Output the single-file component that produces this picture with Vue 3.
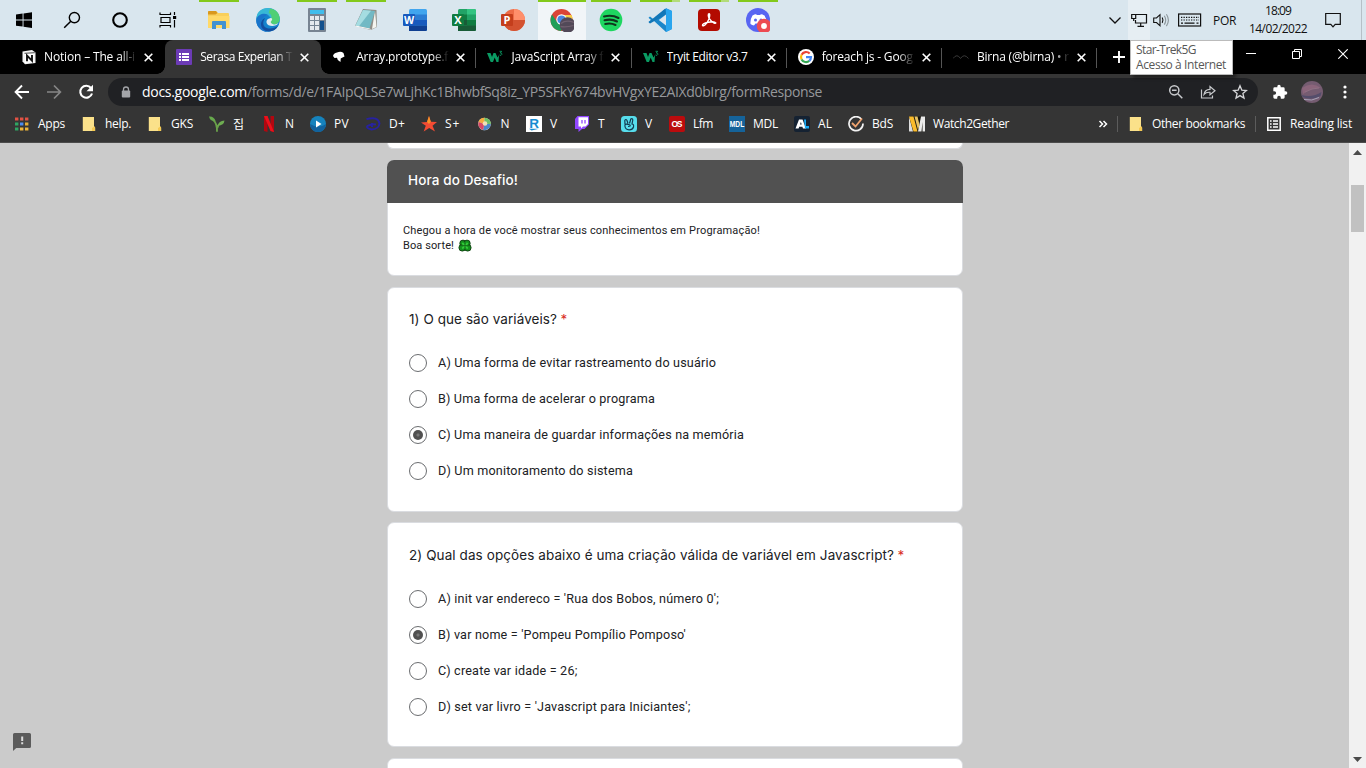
<script setup>
// v-fit="px": spreads or tightens the letters so the text takes the given width
const vFit = {
  mounted(el, { value }) {
    if (!value) return
    const natural = el.getBoundingClientRect().width
    const count = [...el.textContent].length
    el.style.letterSpacing = (value - natural) / count + 'px'
  },
}

const art = {
  start: '<path d="M4 6.4L10.6 5.5V11.5H4zM11.5 5.4L20 4.2V11.5H11.5zM4 12.4H10.6V18.6L4 17.7zM11.5 12.4H20V19.9L11.5 18.7z" fill="#000"/>',
  search: '<circle cx="14.4" cy="9.6" r="5.1" fill="none" stroke="#000" stroke-width="1.4"/><path d="M10.8 13.2L4.2 19.8" stroke="#000" stroke-width="1.5"/>',
  cortana: '<circle cx="12" cy="12" r="6.8" fill="none" stroke="#000" stroke-width="2.1"/>',
  taskview: '<path d="M4 4.5V6.5H14.5V4.5M4 19.5V17.5H14.5V19.5M5 9.5H14V14.5H5zM18.5 4V7M18.5 12V19.5" fill="none" stroke="#000" stroke-width="1.2"/><rect x="17" y="8" width="3.2" height="3" fill="#000"/>',
  explorer: '<path d="M1 4q0-1 1-1h7l2 2h10q1 0 1 1v14H1z" fill="#f8cf5b"/><path d="M1 4q0-1 1-1h7l1.5 2-2 1.5H1z" fill="#d9981d"/><path d="M1 8H22.500V20H1z" fill="#ffd968"/><path d="M5 21V14q0-1 1-1h12q1 0 1 1v7h-4v-4H9v4z" fill="#4292d2"/>',
  edge: '<circle cx="12" cy="12" r="11.800" fill="#1483cd"/><path d="M.6 9C2-2 21-4 23.700 10c.5 4-3 7-7 6-3-1-3-2-2-4 1-4-3-5-6-4Q3 9 1 14z" fill="#37b8d6"/><path d="M14 .5C20 1 24 6 23.700 11c0 4-4 6-7 5-3-1-3-2-2-4 2-4 0-6-2-7z" fill="#50cf75"/><path d="M8 9C3 12 5 23 13 23.700 6 25-1 18 .5 11 2 6 10 4 13 8q-3-1-5 1z" fill="#1974ca"/><path d="M9 10C3 20 14 23 22 18 17 27 4 24 5 15q1-4 4-5z" fill="#134e9f"/><path d="M14.600 10c3 0 1 3 0 4 1 3 5 3 8 1-2 4-11 4-12 0q-1-4 4-5z" fill="#e1eaf0"/>',
  calc: '<rect x="3" y="0" width="18" height="24" rx="1" fill="#778492"/><rect x="5" y="2" width="14" height="4" fill="#41bdec"/><path d="M5 8h4v4H5zM10 8h4v4h-4zM15 8h4v4h-4zM5 13h4v4H5zM10 13h4v4h-4zM5 18h4v4H5zM10 18h4v4h-4z" fill="#e6e9ed"/><path d="M15 13h4v9h-4z" fill="#12518d"/>',
  notepad: '<path d="M9 1L22.500 2 23 19 17 22 1 18z" fill="#8f8f88"/><path d="M21 3L22.500 19 18 21z" fill="#f5f5ef"/><path d="M9 2L21 3 15.500 20.500 1.500 17.500z" fill="#72b9c4"/><path d="M9 2L17 2.700 5 18.200 1.500 17.500z" fill="#a5dce1"/><path d="M1.500 17.500L15.500 20.500 18 21.800 1.500 18.500z" fill="#fff"/>',
  word: '<rect x="6" y="1" width="18" height="22" rx="1.500" fill="#41a5ee"/><path d="M6 6.500H24V12H6z" fill="#2b7cd3"/><path d="M6 12H24V17.500H6z" fill="#185abd"/><path d="M6 17.500H24V21.500q0 1.500-1.500 1.500H6z" fill="#103f91"/><rect x="0" y="6" width="12" height="12" rx="1" fill="#185abd"/><text x="6" y="15.800" font-size="10.500" text-anchor="middle" font-weight="700" font-family="Open Sans,sans-serif" fill="#fff">W</text>',
  excel: '<rect x="6" y="1" width="18" height="22" rx="1.500" fill="#21a366"/><path d="M15 1h7.500Q24 1 24 2.500V6.500H15z" fill="#33c481"/><path d="M6 6.500h9V12H6z" fill="#107c41"/><path d="M6 12h18v5.500H6z" fill="#185c37"/><path d="M15 12h9v5.500h-9z" fill="#107c41"/><path d="M6 17.500H24V21.500q0 1.500-1.500 1.500H6z" fill="#185c37"/><rect x="0" y="6" width="12" height="12" rx="1" fill="#107c41"/><text x="6" y="16" font-size="11" text-anchor="middle" font-weight="700" font-family="Open Sans,sans-serif" fill="#fff">X</text>',
  ppt: '<circle cx="13" cy="12" r="11" fill="#ed6c47"/><path d="M13 1A11 11 0 0 1 24 12H13z" fill="#ff8f6b"/><path d="M2 12H24A11 11 0 0 1 2 12z" fill="#d35230"/><rect x="0" y="6" width="12" height="12" rx="1" fill="#c43e1c"/><text x="6" y="16" font-size="11" text-anchor="middle" font-weight="700" font-family="Open Sans,sans-serif" fill="#fff">P</text>',
  chrome: '<circle cx="11.500" cy="12" r="11" fill="#da4437"/><path d="M2 6.500A11 11 0 0 0 11 23L15 15 7 14z" fill="#1f9e58"/><path d="M11.500 7H21.500A11 11 0 0 1 12 23L16 14z" fill="#f8cd45"/><circle cx="11.500" cy="11.500" r="5.200" fill="#fff"/><circle cx="11.500" cy="11.500" r="4.100" fill="#4a86e0"/><circle cx="17.500" cy="17" r="7.800" fill="#524958"/><path d="M11 15.500q5-4 13-1M10.500 18.500q6 1 13-1" fill="none" stroke="#70606f" stroke-width="1.300"/>',
  spotify: '<circle cx="12" cy="12" r="11.300" fill="#1ed760"/><path d="M5 8.500q8-2 14.500 1.500M5.500 12.300q7-1.800 12.500 1.200M6.200 16q5.800-1.300 10.300 1" fill="none" stroke="#10351d" stroke-width="2" stroke-linecap="round"/>',
  vscode: '<path d="M18 .3L24 3V21L18 24 5.500 12.500 2 15.300.5 14 3 12 .5 9.700 2 8.400 5.500 11.200z" fill="#1a86ca"/><path d="M18 .3L24 3V21L18 24z" fill="#29a5ee"/><path d="M.6 14L17 .8 18 6.500 2 15.500z" fill="#1277b8"/><path d="M18 6.500V17.500L10.800 12z" fill="#dbe6ee"/>',
  acrobat: '<rect x="1" y="1" width="22" height="22" rx="4" fill="#b30b00"/><path d="M5.500 17.500C5 15 17 12.300 18.800 15 18 17 10 10.500 11.500 6c1.500-1.500 1.700 2 .2 5.500S7 19 5.500 17.500z" fill="none" stroke="#fff" stroke-width="1.400"/>',
  discord: '<circle cx="12" cy="12" r="12" fill="#5865f2"/><path d="M6.500 7.500Q9 6 10 6.200L11 7h3l1-.8q2 .3 3.500 1.300 2.500 4 2 8.500-2 1.500-3.500 1.500L15.500 15.500h-6L8 17.500Q6 17 4.500 16 4 11.500 6.500 7.500z" fill="#fff"/><circle cx="9.500" cy="12" r="1.500" fill="#5865f2"/><circle cx="15" cy="12" r="1.500" fill="#5865f2"/><circle cx="18" cy="18" r="7.300" fill="#ed4b52"/><circle cx="18" cy="18" r="2.900" fill="#fff"/>',

  notion: '<path d="M1.500 2.500L11 1l3.500 2.500V14L4 15.300 1.500 12.500z" fill="#f4f4f4"/><path d="M4 5L13 4.200V13L4 14z" fill="#fff"/><path d="M3.500 4.300L13.800 3.700" stroke="#222" stroke-width=".8"/><path d="M6 12.300V6.500L11 11.700V6" fill="none" stroke="#111" stroke-width="1.900"/>',
  forms: '<rect width="16" height="16" rx="1" fill="#6c3bb6"/><path d="M3 4h2v2H3zM3 7h2v2H3zM3 10h2v2H3zM6 4h7v2H6zM6 7h7v2H6zM6 10h7v2H6z" fill="#fff"/>',
  mdn: '<path d="M1 7Q1.500 4 5 3.500q4-1.500 6.500.5L12.500 7.500 10.500 8.500 8.700 9.500 8.500 13 5.800 11 5 8.800 2.500 9z" fill="#fff"/>',
  w3: '<path d="M0 4h3.500L5 8l1.500-4h2l2 4.500L12 6l-.5 7H9.500L7.700 8.500 6 13H3.700z" fill="#0a9b63"/><path d="M12.500 2.300h2.200L13.300 4q2 0 1.500 1.500T12.500 6" fill="none" stroke="#0a9b63" stroke-width=".9"/>',
  google: '<circle cx="8" cy="8" r="8" fill="#fff"/><g fill="none" stroke-width="2.200"><path d="M11.700 4.600A5 5 0 0 0 3.600 5.700" stroke="#ea4335"/><path d="M3.600 5.700A5 5 0 0 0 3.600 10.400" stroke="#fbbc05"/><path d="M3.600 10.400A5 5 0 0 0 11.300 11.900" stroke="#34a853"/><path d="M11.300 11.900A5 5 0 0 0 13 8.100H8" stroke="#4285f4"/></g>',
  wave: '<path d="M0 9.500Q4 4 7.500 9.500 11 4 15.500 9.500" fill="none" stroke="#3a3a3a" stroke-width="1"/>',

  apps: '<path d="M1 1.500h3.400v3H1zM6 1.500h3.400v3H6zM11 1.500h3.400v3H11z" fill="#e25244"/><path d="M1 6.500h3.400v3H1z" fill="#2fa562"/><path d="M6 6.500h3.400v3H6z" fill="#4b8bf0"/><path d="M11 6.500h3.400v3H11z" fill="#e6ad35"/><path d="M1 11.500h3.400v3H1z" fill="#2fa562"/><path d="M6 11.500h3.400v3H6zM11 11.500h3.400v3H11z" fill="#edb53a"/>',
  folder: '<path d="M1.800 1H13v10.500h1.200V15H1.800z" fill="#fbe18a"/><path d="M11 12l3-1.800V15H11z" fill="#f6ca52"/>',
  plant: '<path d="M8 15.800Q8.500 8 4 3.500M8.300 12Q9 8.500 12 7" fill="none" stroke="#6aa14a" stroke-width="1.800"/><path d="M0 .5q5-.5 6.500 4.500Q1 5.500 0 .5z" fill="#67a94d"/><path d="M9 9.500q.5-4.500 6.500-5-.5 5-6.500 5z" fill="#6ead51"/>',
  netflix: '<path d="M3 0h3.500v16L3 15zM9.500 0H13v16l-3.500-1z" fill="#b20710"/><path d="M3 0h3.500L13 16 9.500 15z" fill="#ed101b"/>',
  prime: '<circle cx="8" cy="8" r="8" fill="#1683bd"/><path d="M0 8a8 8 0 0 0 16 0q-7 5-16 0z" fill="#12629d"/><path d="M6 4.500L11.500 8 6 11.500z" fill="#fff"/>',
  disney: '<path d="M1.500 3.200Q13 0 14.500 7.500q-.5 5.500-8 6Q.5 12 2.500 10q4-2.500 8.500-1.500M7 7v4" fill="none" stroke="#2722a0" stroke-width="1.900"/>',
  star: '<path d="M8 0l1.800 5.800L16 6l-4.500 3.800L14 15.500 8.200 12 2.700 15.500 4.800 9.800 0 6.500l6-.6z" fill="#f34b33"/><path d="M8 0l1.800 5.800L8 8 6 5.900z" fill="#f79228"/>',
  globe: '<circle cx="7.500" cy="8" r="6.300" fill="#ded9c4"/><path d="M1.500 6a6.300 6.300 0 0 1 6-4.300V8z" fill="#f5ab3d"/><path d="M7.500 1.700A6.300 6.300 0 0 1 13.800 8L7.500 8z" fill="#6dbf65"/><path d="M13.800 8A6.300 6.300 0 0 1 6 14L7.500 8z" fill="#4b86ca"/><path d="M1.500 6q-1 6 4.500 8l1.500-6z" fill="#d74968"/><circle cx="8" cy="7.500" r="2.300" fill="#f1dfb8"/>',
  viki: '<path d="M0 0h16v16H0z" fill="#fff"/><text x="8" y="12" text-anchor="middle" font-size="13.500" font-weight="700" font-family="Liberation Sans,sans-serif" fill="#168bd1">R</text><path d="M3 12.800h10l-7.500 1.600z" fill="#168bd1"/>',
  twitch: '<path d="M3.500 0L1 3v10h3.500v3L8 13h2.500L15 8.500V0z" fill="#9146ff"/><path d="M4.500 1.200H14V8l-2.500 2.500H9l-2 2v-2H4.500z" fill="#fff"/><path d="M8 4v3.500M11 4v3.500" stroke="#9146ff" stroke-width="1.300"/>',
  hand: '<rect width="16" height="16" rx="3.500" fill="#57ddec"/><path d="M4 8.500L3.800 4.500Q4.800 2.500 6 4.500L7 7.500M8.500 7.500L9.800 3Q11.500 2 11.800 4L11 8Q13 8 12.500 11 11.500 14 8 13.800 4.500 13.500 4 10.500 3.500 8 6 8.200L9 9Q10 10.500 7 10.500" fill="none" stroke="#123a50" stroke-width="1.200"/>',
  lastfm: '<rect width="16" height="16" rx="2" fill="#bb0b0d"/><text x="8" y="11" text-anchor="middle" font-size="8.500" font-weight="700" font-family="Liberation Sans,sans-serif" fill="#fff" textLength="11">OS</text>',
  mdl: '<path d="M0 0h16v16H0z" fill="#15639a"/><text x="8" y="11" text-anchor="middle" font-size="8.500" font-weight="700" font-family="Liberation Sans,sans-serif" fill="#fff" textLength="14.500" lengthAdjust="spacingAndGlyphs">MDL</text>',
  anilist: '<rect width="16" height="16" rx="2" fill="#152232"/><path d="M1.500 12.500L5 3.500h3.500L12 12.500H9l-.6-1.700H5.200l-.6 1.700zM6 8.500h1.700l-.8-2.600z" fill="#fff"/><path d="M10 3.500h2v6.500h3v2.500h-4z" fill="#18a9f5"/>',
  check: '<path d="M13.500 3.300A7 7 0 1 0 15 7.500" fill="none" stroke="#f3f3f3" stroke-width="1.700"/><path d="M4 7l3.500 3.500L14 2.500" fill="none" stroke="#efa36f" stroke-width="1.800"/>',
  w2g: '<path d="M0 .5h16v15H0z" fill="#16150f"/><path d="M0 .5v15h4z" fill="#ddd"/><path d="M0 .5L4.500 15.500H8.500L4.500.5z" fill="#fbbc2c"/><path d="M9 15.500L12 .5h4v15h-2.500V6l-1 9.500z" fill="#eaeaea"/><path d="M5.500.5H8.500L10.500 9 9 14z" fill="#e6c266"/>',

  chevron: '<path d="M2.500 5.500L8 11l5.500-5.500" fill="none" stroke="#111" stroke-width="1.300"/>',
  network: '<path d="M5 2.500h10.500v8.500h-11V8M9.700 11v3M6.500 14.300h6.500M.7 2.500h4v4h-4zM2.700 6.500V9" fill="none" stroke="#111" stroke-width="1.200"/>',
  sound: '<path d="M.7 6h2.800L7 2.700v11L3.500 10.500H.7z" fill="none" stroke="#111" stroke-width="1.100"/><path d="M9.200 5.500q1.600 2.700 0 5.400" fill="none" stroke="#111" stroke-width="1.100"/><path d="M11.300 3.800q2.800 4.400 0 8.800M13.400 2.300q4 5.900 0 11.800" fill="none" stroke="#8c969b" stroke-width="1.100"/>',
  keyboard: '<rect x=".6" y="2" width="22" height="12" fill="none" stroke="#111" stroke-width="1.200"/><path d="M3 5.300h18M3 8h18" stroke="#111" stroke-width="1.200" stroke-dasharray="1.300 1.200"/><path d="M3 11.200h2M6.500 11.200h10M18.500 11.200h2" stroke="#111" stroke-width="1.200"/>',
  notice: '<path d="M.7 1.500h14.600v10.800H10.200L8 14.800 5.800 12.300H.7z" fill="none" stroke="#111" stroke-width="1.200"/>',
}

const systemIcons = ['start', 'search', 'cortana', 'taskview']
const apps = [
  { name: 'explorer', line: 'full' },
  { name: 'edge' },
  { name: 'calc', line: 'full' },
  { name: 'notepad', line: 'full' },
  { name: 'word' },
  { name: 'excel' },
  { name: 'ppt' },
  { name: 'chrome', line: 'wide', active: true },
  { name: 'spotify', line: 'full' },
  { name: 'vscode', line: 'split' },
  { name: 'acrobat', line: 'split' },
  { name: 'discord', line: 'full' },
]

const tabs = [
  { icon: 'notion', title: 'Notion – The all-i', w: 91 },
  { icon: 'forms', title: 'Serasa Experian T', w: 92, active: true },
  { icon: 'mdn', title: 'Array.prototype.f', w: 92 },
  { icon: 'w3', title: 'JavaScript Array f', w: 92 },
  { icon: 'w3', title: 'Tryit Editor v3.7', w: 81 },
  { icon: 'google', title: 'foreach js - Goog', w: 91 },
  { icon: 'wave', title: 'Birna (@birna) • r', w: 92 },
]

const bookmarks = [
  { icon: 'apps', label: 'Apps', w: 27 },
  { icon: 'folder', label: 'help.', w: 26 },
  { icon: 'folder', label: 'GKS', w: 22 },
  { icon: 'plant', label: '집', w: 12 },
  { icon: 'netflix', label: 'N', w: 9 },
  { icon: 'prime', label: 'PV', w: 15 },
  { icon: 'disney', label: 'D+', w: 16 },
  { icon: 'star', label: 'S+', w: 15.5 },
  { icon: 'globe', label: 'N', w: 9.5 },
  { icon: 'viki', label: 'V', w: 8 },
  { icon: 'twitch', label: 'T', w: 7 },
  { icon: 'hand', label: 'V', w: 8 },
  { icon: 'lastfm', label: 'Lfm', w: 20 },
  { icon: 'mdl', label: 'MDL', w: 25 },
  { icon: 'anilist', label: 'AL', w: 14 },
  { icon: 'check', label: 'BdS', w: 21 },
  { icon: 'w2g', label: 'Watch2Gether', w: 76 },
]

const questions = [
  {
    title: '1) O que são variáveis?',
    w: 148,
    selected: 2,
    options: [
      ['A) Uma forma de evitar rastreamento do usuário', 278],
      ['B) Uma forma de acelerar o programa', 217],
      ['C) Uma maneira de guardar informações na memória', 306],
      ['D) Um monitoramento do sistema', 195],
    ],
  },
  {
    title: '2) Qual das opções abaixo é uma criação válida de variável em Javascript?',
    w: 485,
    selected: 1,
    options: [
      ["A) init var endereco = 'Rua dos Bobos, número 0';", 281],
      ["B) var nome = 'Pompeu Pompílio Pomposo'", 248],
      ['C) create var idade = 26;', 139.5],
      ["D) set var livro = 'Javascript para Iniciantes';", 252.5],
    ],
  },
]
</script>

<template>
  <div class="screen">
    <header class="taskbar">
      <div v-for="n in systemIcons" :key="n" class="sys"><svg viewBox="0 0 24 24" v-html="art[n]" /></div>
      <div class="apps">
        <div v-for="a in apps" :key="a.name" class="app" :class="{ active: a.active }">
          <i v-if="a.line" class="line" :class="a.line"></i>
          <svg viewBox="0 0 24 24" v-html="art[a.name]" />
        </div>
      </div>
      <div class="tray">
        <div class="t-chev"><svg width="16" height="16" v-html="art.chevron" /></div>
        <div class="t-net"><svg width="17" height="16" v-html="art.network" /></div>
        <svg class="t-sound" width="18" height="16" v-html="art.sound" />
        <svg class="t-key" width="24" height="16" v-html="art.keyboard" />
        <span class="t-lang"><span v-fit="23">POR</span></span>
        <div class="clock"><span v-fit="26">18:09</span><span v-fit="58">14/02/2022</span></div>
        <svg class="t-note" width="16" height="16" v-html="art.notice" />
        <i class="t-edge"></i>
      </div>
    </header>

    <nav class="tabs">
      <div v-for="(t, i) in tabs" :key="i" class="tab" :class="{ active: t.active, sep: i > 1 }">
        <svg class="fav" viewBox="0 0 16 16" v-html="art[t.icon]" />
        <div class="title" :class="{ plain: i === 4 }"><span v-fit="t.w">{{ t.title }}</span></div>
        <svg class="close" viewBox="0 0 9 9"><path d="M.7.7l7.600 7.600M8.300.7L.7 8.300" stroke="#fff" stroke-width="1.600" /></svg>
      </div>
      <svg class="plus" viewBox="0 0 12 12"><path d="M6 0v12M0 6h12" stroke="#fff" stroke-width="1.900" /></svg>
      <div class="winctl">
        <svg width="10" height="10"><path d="M0 4.500h10" stroke="#fff" /></svg>
        <svg width="10" height="10"><path d="M.5 2.500h7v7h-7zM2.500 2.500v-2h7v7h-2" fill="none" stroke="#fff" /></svg>
        <svg width="10" height="10"><path d="M.3.3l9.400 9.400M9.700.3L.3 9.700" stroke="#fff" stroke-width="1.100" /></svg>
      </div>
    </nav>

    <div class="toolbar">
      <svg class="nav" viewBox="0 0 16 16"><path d="M15 8H2M8 1.500L1.600 8 8 14.500" fill="none" stroke="#fff" stroke-width="1.900" /></svg>
      <svg class="nav" viewBox="0 0 16 16"><path d="M1 8H14M8 1.500L14.400 8 8 14.500" fill="none" stroke="#868686" stroke-width="1.700" /></svg>
      <svg class="nav" viewBox="0 0 16 16"><path d="M13 4A6 6 0 1 0 14 9.500" fill="none" stroke="#fff" stroke-width="2.100" /><path d="M15 .7v6.500H8.500z" fill="#fff" /></svg>
      <div class="omni">
        <svg class="lock" viewBox="0 0 10 12"><path d="M2.500 5V3.500a2.500 2.500 0 0 1 5 0V5" fill="none" stroke="#a3a5a9" stroke-width="1.300" /><rect x=".8" y="4.500" width="8.400" height="7" rx="1" fill="#a3a5a9" /></svg>
        <span class="host" v-fit="105">docs.google.com</span><span class="path" v-fit="575">/forms/d/e/1FAIpQLSe7wLjhKc1BhwbfSq8iz_YP5SFkY674bvHVgxYE2AIXd0bIrg/formResponse</span>
        <div class="omni-icons">
          <svg width="16" height="16" viewBox="0 0 16 16" fill="none" stroke="#c8cacd" stroke-width="1.500"><circle cx="6.300" cy="6.300" r="4.600" /><path d="M9.800 9.800l4.500 4.500M4 6.300h4.600" /></svg>
          <svg width="16" height="16" viewBox="0 0 16 16" fill="none" stroke="#c8cacd" stroke-width="1.200"><path d="M1.500 5.500V14h11V11.500M4 10.500q.7-5 6-5.200V2.500L15 6.700l-5 4.100V8.300Q6 8 4 10.500z" /></svg>
          <svg width="16" height="16" viewBox="0 0 16 16" fill="none" stroke="#d5d6d8" stroke-width="1.300"><path d="M8 1.800l1.800 4.300 4.600.4-3.500 3 1.100 4.600L8 11.600 4 14.100l1.100-4.600-3.500-3 4.600-.4z" /></svg>
        </div>
      </div>
      <svg class="puzzle" viewBox="0 0 24 24"><path fill="#fff" d="M20.500 11H19V7a2 2 0 0 0-2-2h-4V3.500a2.500 2.500 0 0 0-5 0V5H4a2 2 0 0 0-2 2v3.800h1.500a2.700 2.700 0 0 1 0 5.400H2V20a2 2 0 0 0 2 2h3.800v-1.500a2.700 2.700 0 0 1 5.400 0V22H17a2 2 0 0 0 2-2v-4h1.500a2.500 2.500 0 0 0 0-5z" /></svg>
      <svg class="avatar" viewBox="0 0 22 22"><circle cx="11" cy="11" r="11" fill="#755c71" /><path d="M1 7q10-7 19 0-9-1-18 6z" fill="#8b657b" /><path d="M.5 14q11 3 20-3l-1 4q-9 5-18 1z" fill="#544d6b" /><path d="M3 18.500q8 2 15-2" stroke="#a7a3b8" fill="none" /><path d="M4 11q7-4 14-4" stroke="#8f7183" fill="none" /></svg>
      <svg class="dots" viewBox="0 0 4 14"><g fill="#fff"><circle cx="2" cy="2" r="1.600" /><circle cx="2" cy="7" r="1.600" /><circle cx="2" cy="12" r="1.600" /></g></svg>
    </div>

    <div class="bookmarks">
      <div v-for="(b, i) in bookmarks" :key="i" class="bm">
        <svg viewBox="0 0 16 16" v-html="art[b.icon]" /><span v-fit="b.w">{{ b.label }}</span>
      </div>
      <div class="bm-right">
        <svg class="more" width="10" height="10"><path d="M1.500 2L4.500 5 1.500 8M5.500 2L8.500 5 5.500 8" fill="none" stroke="#fff" stroke-width="1.500" /></svg>
        <i class="bm-div"></i>
        <svg viewBox="0 0 16 16" v-html="art.folder" /><span v-fit="93">Other bookmarks</span>
        <i class="bm-div second"></i>
        <svg viewBox="0 0 16 16"><path d="M1.800 1.800h12.400v12.400H1.800z" fill="none" stroke="#fff" stroke-width="1.500" /><path d="M4 5h1.600M4 8h1.600M4 11h1.600M7 5h5M7 8h5M7 11h5" stroke="#fff" stroke-width="1.300" /></svg>
        <span v-fit="62">Reading list</span>
      </div>
    </div>

    <main class="page">
      <div class="column">
        <section class="card stub"></section>
        <section class="card intro">
          <h2><span v-fit="110">Hora do Desafio!</span></h2>
          <p>
            <span v-fit="357">Chegou a hora de você mostrar seus conhecimentos em Programação!</span>
            <span class="luck"><span v-fit="51">Boa sorte!</span>
              <svg viewBox="0 0 14 14"><g fill="#14921e" stroke="#123d12" stroke-width=".9"><circle cx="5" cy="4.300" r="3.200" /><circle cx="9" cy="4.300" r="3.200" /><circle cx="4.300" cy="8.700" r="3.400" /><circle cx="9.700" cy="8.700" r="3.400" /></g><circle cx="7" cy="6.700" r="3.600" fill="#1da526" /><path d="M4.300 4L9.700 9.500M9.700 4L4.300 9.500" stroke="#35cf3b" stroke-width="1.500" /><path d="M7 2.500v9.500M2.500 6.700h9" stroke="#0b5511" stroke-width=".7" /></svg>
            </span>
          </p>
        </section>
        <section v-for="q in questions" :key="q.title" class="card question">
          <h3><span v-fit="q.w">{{ q.title }}</span><b>*</b></h3>
          <div v-for="(o, i) in q.options" :key="o[0]" class="option">
            <i class="radio" :class="{ on: i === q.selected }"></i><span v-fit="o[1]">{{ o[0] }}</span>
          </div>
        </section>
        <section class="card next"></section>
      </div>
      <aside class="scroll">
        <svg width="9" height="5"><path d="M0 5L4.500 0 9 5z" fill="#4b4b4b" /></svg>
        <i class="thumb"></i>
        <svg width="9" height="5"><path d="M0 0L4.500 5 9 0z" fill="#4b4b4b" /></svg>
      </aside>
      <svg class="feedback" viewBox="0 0 18 18"><path d="M1.500 0H16.500Q18 0 18 1.500V13.500Q18 15 16.500 15H3.200L0 18V1.500Q0 0 1.500 0z" fill="#5b5b5b" /><path d="M8.200 3.500h2v4.500h-2zM8.200 9.300h2v2h-2z" fill="#ddd" /></svg>
    </main>

    <div class="tooltip"><span v-fit="60">Star-Trek5G</span><span v-fit="90">Acesso à Internet</span></div>
  </div>
</template>

<style>
html, body { margin: 0; overflow: hidden; }
</style>

<style scoped>
.screen { position: relative; width: 1366px; height: 768px; overflow: hidden; display: flex; flex-direction: column; font-family: "Open Sans", "Noto Sans CJK KR", sans-serif; font-size: 12px; color: #fff; }
.screen * { box-sizing: border-box; }
svg { display: block; flex: none; }
span { white-space: pre; }

.taskbar { flex: none; height: 40px; background: #d9e6ee; display: flex; color: #111; }
.sys { width: 48px; height: 40px; display: flex; align-items: center; justify-content: center; }
.sys svg { width: 24px; height: 24px; }
.apps { display: flex; gap: 1px; margin-left: 3px; }
.app { position: relative; width: 48px; height: 40px; display: flex; align-items: center; justify-content: center; }
.app svg { width: 24px; height: 24px; }
.app.active { background: #f1f5f8; }
.line { position: absolute; top: 0; left: 4px; width: 40px; height: 2px; background: #83c91b; }
.line.wide { left: 0; width: 48px; }
.line.split { background: linear-gradient(90deg, #83c91b 32px, #b3dc79 32px); }
.tray { margin-left: auto; display: flex; align-items: center; height: 40px; }
.t-chev { margin-right: 5px; }
.t-net { width: 22px; height: 40px; background: #e6eef3; display: flex; align-items: center; justify-content: center; margin-right: 4px; }
.t-sound { margin-right: 7px; margin-left: -1px; }
.t-key { margin-right: 11px; }
.t-lang { width: 23px; margin-right: 13px; }
.clock { width: 58px; display: flex; flex-direction: column; align-items: center; line-height: 18px; padding-bottom: 1px; margin-right: 18px; }
.t-note { margin-right: 20px; }
.t-edge { width: 1px; height: 40px; background: #b5c0c7; margin-right: 4px; }

.tabs { flex: none; height: 34px; background: #000; display: flex; padding-left: 10px; }
.tab { position: relative; flex: none; width: 155.200px; height: 34px; display: flex; align-items: center; padding-left: 11px; }
.tab.active { width: 156px; background: #353535; border-radius: 8px 8px 0 0; }
.tab.active::before, .tab.active::after { content: ""; position: absolute; bottom: 0; width: 8px; height: 8px; }
.tab.active::before { left: -8px; background: radial-gradient(circle at 0 0, transparent 7.500px, #353535 8px); }
.tab.active::after { right: -8px; background: radial-gradient(circle at 100% 0, transparent 7.500px, #353535 8px); }
.tab.sep::after { content: ""; position: absolute; right: 0; top: 8px; width: 1px; height: 20px; background: #555; }
.fav { width: 16px; height: 16px; margin-right: 7px; }
.tab.sep .fav, .tab.active .fav { margin-right: 8px; }
.title { width: 93px; overflow: hidden; line-height: 18px; mask-image: linear-gradient(90deg, #000 76px, transparent 93px); }
.title.plain { mask-image: none; }
.close { width: 9px; height: 9px; margin-left: 7px; }
.plus { width: 12px; height: 12px; margin: 11px 0 0 16px; }
.winctl { margin-left: auto; display: flex; gap: 36px; padding: 9px 18px 0 0; }

.toolbar { flex: none; height: 32px; background: #353535; display: flex; align-items: center; padding: 4px 0 0 14px; }
.nav { width: 16px; height: 16px; margin-right: 16px; }
.omni { width: 1150px; height: 28px; margin-left: -2px; border-radius: 14px; background: #202124; display: flex; align-items: center; padding-left: 13px; font-size: 14px; }
.host, .path { margin-bottom: 2px; }
.lock { width: 10px; height: 12px; margin-right: 11px; }
.path { color: #96989b; }
.omni-icons { margin-left: auto; display: flex; gap: 16px; padding-right: 10px; }
.puzzle { width: 16px; height: 16px; margin-left: 14px; }
.avatar { width: 22px; height: 22px; margin-left: 13px; }
.dots { width: 4px; height: 14px; margin-left: 20px; }

.bookmarks { flex: none; height: 37px; background: #353535; border-bottom: 1px solid #4c4c4c; display: flex; align-items: center; gap: 16px; padding-left: 14px; padding-bottom: 1px; }
.bm, .bm-right { display: flex; align-items: center; }
.bm svg, .bm-right svg:not(.more) { width: 16px; height: 16px; margin-right: 8px; }
.bm-right { margin-left: auto; padding-right: 14px; }
.bm-div { width: 1px; height: 16px; background: #5c5c5c; margin: 0 10px 0 9px; }
.bm-div.second { margin: 0 10px; }

.page { position: relative; flex: 1; min-height: 0; background: #cbcbcb; display: flex; justify-content: space-between; color: #202124; overflow: hidden; }
.column { width: 576px; margin-left: 387px; display: flex; flex-direction: column; }
.card { flex: none; width: 576px; background: #fff; border: 1px solid #dadce0; border-radius: 7px; }
.stub { height: 6px; border-top: 0; border-radius: 0 0 7px 7px; margin-bottom: 11px; }
.intro { height: 116px; margin-bottom: 11px; }
.intro h2 { margin: -1px -1px 0; height: 43px; background: #515151; border-radius: 7px 7px 0 0; color: #fff; font: 500 13.500px/41px Inter, sans-serif; padding-left: 21px; }
.intro p { margin: 20px 0 0 15px; font: 11px/15px Roboto, sans-serif; display: flex; flex-direction: column; align-items: flex-start; }
.luck { display: flex; align-items: center; white-space: normal; }
.luck svg { width: 14px; height: 14px; margin-left: 4px; }
.question { height: 225px; margin-bottom: 10px; padding: 21px 0 0 21px; }
.question + .question { padding-top: 22px; margin-bottom: 11px; }
.question h3 { margin: 0 0 16px; height: 20px; font: 400 13.500px/20px Inter, sans-serif; display: flex; }
.question h3 b { font-weight: 400; color: #d93025; margin-left: 3.500px; }
.option { height: 36px; display: flex; align-items: center; font: 12.600px/18px Roboto, sans-serif; }
.radio { width: 18px; height: 18px; border: 1.500px solid #6b6d70; border-radius: 50%; margin-right: 11px; display: flex; align-items: center; justify-content: center; }
.radio.on::after { content: ""; width: 10px; height: 10px; border-radius: 50%; background: radial-gradient(circle, #777 1px, #505050 2px); }
.next { height: 60px; }
.scroll { width: 17px; background: #f1f1f1; display: flex; flex-direction: column; align-items: center; padding: 7px 0 6px; }
.thumb { width: 13px; height: 47px; background: #c1c1c1; margin: 30px 0 auto; }
.feedback { position: absolute; left: 13px; top: 590px; width: 18px; height: 18px; }
.tooltip { position: absolute; left: 1130px; top: 40px; width: 103px; height: 35px; background: #fff; border: 1px solid #bbb; box-shadow: 3px 3px 3px #0006; color: #575757; display: flex; flex-direction: column; align-items: flex-start; line-height: 15px; padding: 1px 0 0 5px; }
</style>
